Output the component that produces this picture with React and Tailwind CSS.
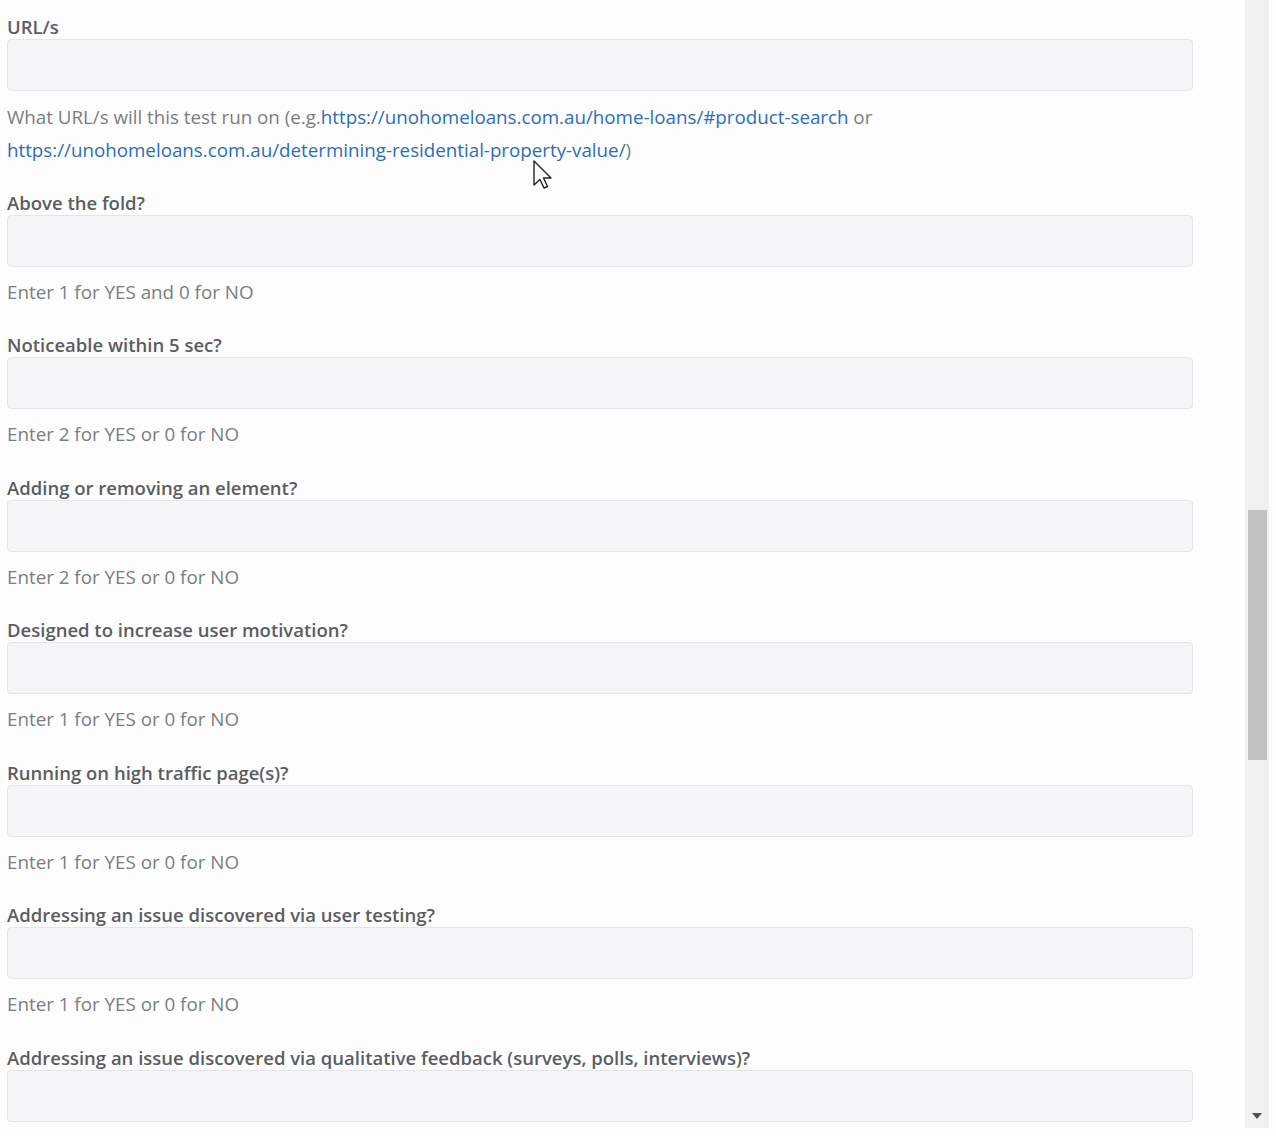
import React from "react";

const FIELDS = [
  { label: "Above the fold?", help: "Enter 1 for YES and 0 for NO" },
  { label: "Noticeable within 5 sec?", help: "Enter 2 for YES or 0 for NO" },
  { label: "Adding or removing an element?", help: "Enter 2 for YES or 0 for NO" },
  { label: "Designed to increase user motivation?", help: "Enter 1 for YES or 0 for NO" },
  { label: "Running on high traffic page(s)?", help: "Enter 1 for YES or 0 for NO" },
  { label: "Addressing an issue discovered via user testing?", help: "Enter 1 for YES or 0 for NO" },
  { label: "Addressing an issue discovered via qualitative feedback (surveys, polls, interviews)?", help: null },
];

const font = { fontFamily: '"Open Sans", "Noto Sans", sans-serif' };

function Field({ label, children }) {
  return (
    <div className="mb-[24.5px]">
      <label className="block whitespace-nowrap text-[18.5px] font-semibold leading-[24px] text-[#5a5d61]">{label}</label>
      <input className="block h-[52px] w-[1186px] rounded-[4px] border border-[#e3e5e8] bg-[#f5f6f7] outline-none" />
      {children}
    </div>
  );
}

function Cursor() {
  return (
    <svg className="absolute left-[533px] top-[160px]" width="20" height="30" viewBox="0 0 20 30">
      <path d="M1 1 L1 25 L7 19.5 L11 28 L14.5 26.5 L10.5 18 L18 18 Z" fill="#fff" stroke="#222" strokeWidth="1.4" strokeLinejoin="round" />
    </svg>
  );
}

export default function App() {
  return (
    <div className="relative flex h-[1136px] w-[1276px] overflow-hidden bg-[#fdfdfd]" style={font}>
      <div className="w-[1245px] pl-[7px] pt-[15px]">
        <Field label="URL/s">
          <p className="mt-[9px] whitespace-nowrap text-[18.75px] leading-[33px] text-[#7a7d81]">
            What URL/s will this test run on (e.g.
            <span className="text-[#2d6db8]">https://unohomeloans.com.au/home-loans/#product-search</span> or
            <br />
            <span className="text-[#2d6db8]">https://unohomeloans.com.au/determining-residential-property-value/</span>)
          </p>
        </Field>
        {FIELDS.map((f) => (
          <Field key={f.label} label={f.label}>
            {f.help && <p className="mt-[9px] text-[18.8px] leading-[33px] text-[#7a7d81]">{f.help}</p>}
          </Field>
        ))}
      </div>
      <div className="flex h-[1128px] w-[24px] flex-col items-center bg-[#f1f1f2]">
        <div className="mt-[510px] h-[250px] w-[19px] bg-[#c1c1c1]" />
        <div className="mt-auto mb-[9px] h-0 w-0 border-x-[5px] border-t-[6px] border-x-transparent border-t-[#505050]" />
      </div>
      <Cursor />
    </div>
  );
}
